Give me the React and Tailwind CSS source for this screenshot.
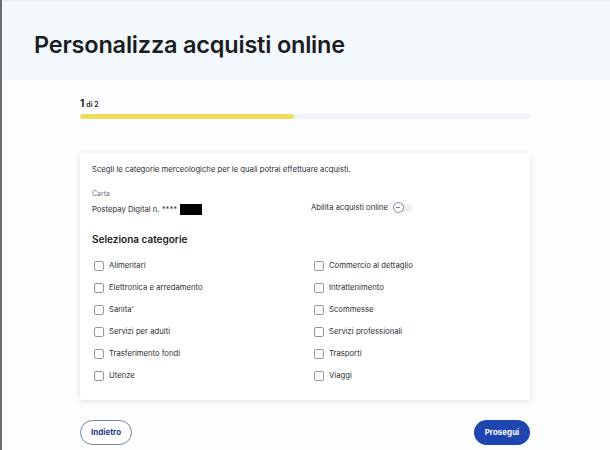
import React from "react";

const left = ["Alimentari", "Elettronica e arredamento", "Sanita'", "Servizi per adulti", "Trasferimento fondi", "Utenze"];
const right = ["Commercio al dettaglio", "Intrattenimento", "Scommesse", "Servizi professionali", "Trasporti", "Viaggi"];

function Check({ label }) {
  return (
    <div className="flex items-center h-[22px]">
      <span className="w-[10px] h-[10px] rounded-[2px] border border-[#8f98a5] bg-white mr-[5px] shrink-0"></span>
      <span className="text-[7.7px] text-[#2b2f36]">{label}</span>
    </div>
  );
}

export default function App() {
  return (
    <div className="w-[610px] h-[450px] overflow-hidden bg-[#fcfdfe] border-l-2 border-[#6e6e6e] flex flex-col" style={{ fontFamily: "Inter, 'Noto Sans', sans-serif" }}>
      <div className="h-[80px] bg-[#f3f8fd] border-t border-[#e8edf2] flex items-center pl-[32px] shrink-0">
        <h1 className="text-[23.5px] font-semibold text-[#1a1d22] tracking-[-0.2px] mt-[8px]">Personalizza acquisti online</h1>
      </div>
      <div className="w-[450px] ml-[78px] flex flex-col">
        <div className="mt-[16px] flex items-baseline text-[#1a1d22]">
          <span className="text-[10px] font-bold">1</span>
          <span className="text-[7px] font-semibold ml-[2px]">di 2</span>
        </div>
        <div className="mt-[3px] h-[5px] rounded-full bg-[#eef2fb] overflow-hidden">
          <div className="h-full w-[214px] bg-[#eedc5c] rounded-full"></div>
        </div>
        <div className="mt-[34px] bg-white rounded-[3px] shadow-[0_1px_6px_rgba(0,0,0,0.12)] px-[12px] pt-[11px] pb-[13px]">
          <div className="text-[7.7px] text-[#2b2f36]">Scegli le categorie merceologiche per le quali potrai effettuare acquisti.</div>
          <div className="mt-[13px] text-[7px] text-[#6c727c]">Carta</div>
          <div className="flex items-center mt-[5px]">
            <div className="w-[219px] flex items-center">
              <span className="text-[7.7px] text-[#2b2f36]">Postepay Digital n. ****</span>
              <span className="ml-[3px] w-[22px] h-[11px] bg-black inline-block"></span>
            </div>
            <div className="flex items-center -mt-[4px]">
              <span className="text-[7.7px] text-[#2b2f36]">Abilita acquisti online</span>
              <span className="ml-[6px] relative w-[18px] h-[8px] rounded-full bg-[#eceef1] inline-flex items-center">
                <span className="absolute left-[-1px] w-[11px] h-[11px] rounded-full bg-white border border-[#7f8794] flex items-center justify-center">
                  <span className="w-[4px] h-[1px] bg-[#7f8794]"></span>
                </span>
              </span>
            </div>
          </div>
          <div className="mt-[16px] text-[10px] font-semibold text-[#1a1d22]">Seleziona categorie</div>
          <div className="mt-[8px] flex pl-[2px]">
            <div className="w-[220px] flex flex-col">
              {left.map((l) => <Check key={l} label={l} />)}
            </div>
            <div className="flex flex-col">
              {right.map((l) => <Check key={l} label={l} />)}
            </div>
          </div>
        </div>
        <div className="mt-[20px] flex justify-between">
          <button className="h-[25px] w-[52px] rounded-full border border-[#7b869c] bg-white text-[8px] font-bold text-[#1e3a8a]">Indietro</button>
          <button className="h-[25px] w-[56px] rounded-full bg-[#1f45b1] text-[8px] font-bold text-white">Prosegui</button>
        </div>
      </div>
    </div>
  );
}
